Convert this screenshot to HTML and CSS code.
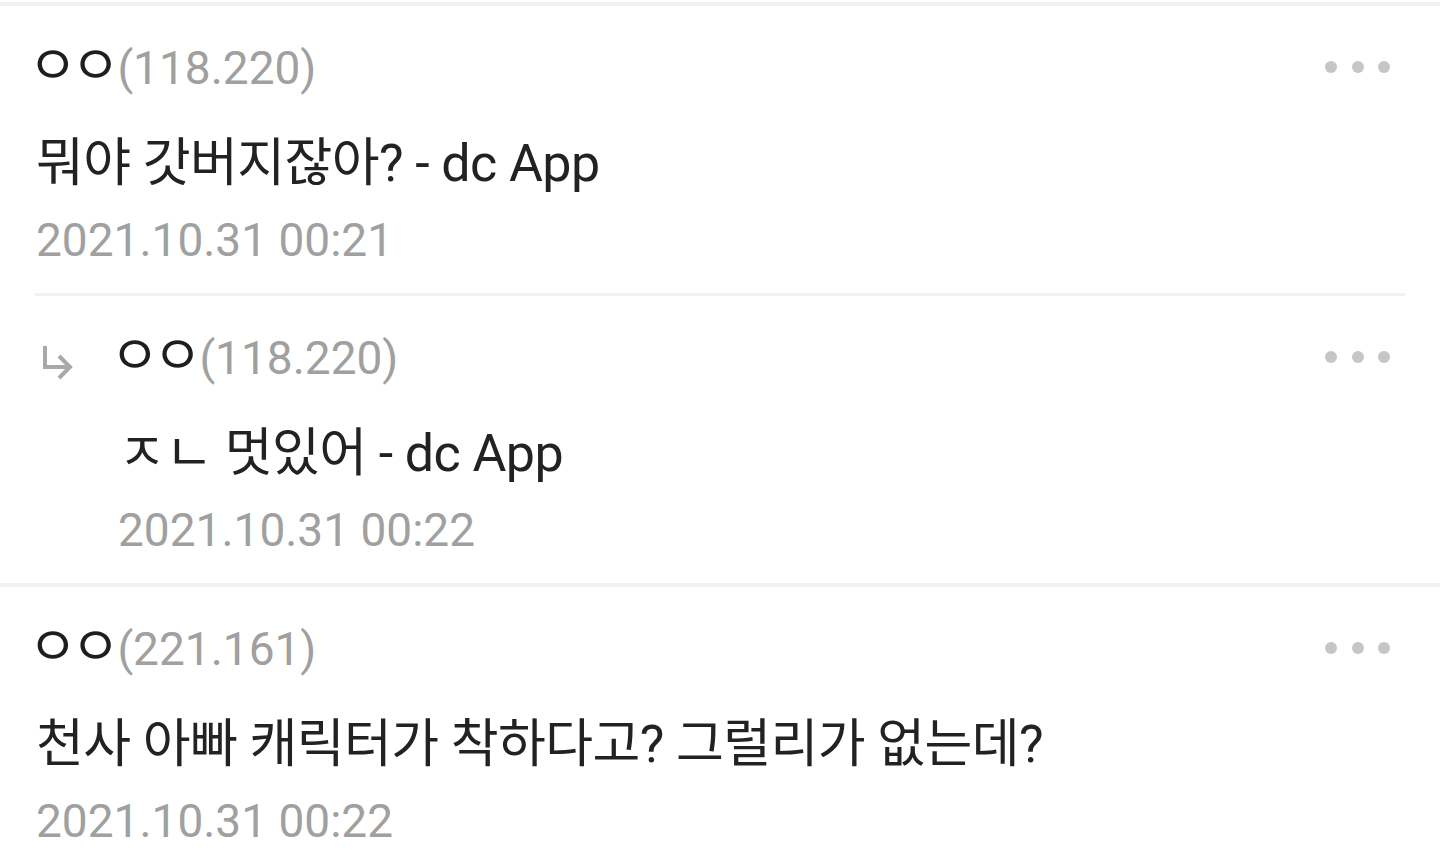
FILE: index.html
```html
<!DOCTYPE html>
<html lang="ko">
<head>
    <meta charset="UTF-8">
    <title>댓글</title>
    <link rel="stylesheet" href="styles.css">
</head>
<body>
    <ul class="comment-list">
        <li class="comment-group">
            <div class="comment">
                <div class="comment-head">
                    <p class="writer"><span class="nick">ㅇㅇ</span><span class="ip">(118.220)</span></p>
                    <button class="more" type="button"><span></span><span></span><span></span></button>
                </div>
                <p class="text">뭐야 갓버지잖아? - dc App</p>
                <p class="date">2021.10.31 00:21</p>
            </div>
            <!-- reply -->
            <div class="comment reply">
                <div class="reply-mark">
                    <svg width="34" height="38" viewBox="0 0 34 38" fill="none" stroke="#a9a9a9" stroke-width="4">
                        <path d="M5 3 V24 H30"/>
                        <path d="M19 13 L30 24 L19 35"/>
                    </svg>
                </div>
                <div class="reply-body">
                    <div class="comment-head">
                        <p class="writer"><span class="nick">ㅇㅇ</span><span class="ip">(118.220)</span></p>
                        <button class="more" type="button"><span></span><span></span><span></span></button>
                    </div>
                    <p class="text">ㅈㄴ 멋있어 - dc App</p>
                    <p class="date">2021.10.31 00:22</p>
                </div>
            </div>
        </li>
        <li class="comment-group">
            <div class="comment">
                <div class="comment-head">
                    <p class="writer"><span class="nick">ㅇㅇ</span><span class="ip">(221.161)</span></p>
                    <button class="more" type="button"><span></span><span></span><span></span></button>
                </div>
                <p class="text">천사 아빠 캐릭터가 착하다고? 그럴리가 없는데?</p>
                <p class="date">2021.10.31 00:22</p>
            </div>
        </li>
    </ul>
</body>
</html>
```

FILE: styles.css
```css
html, body {
    overflow: hidden;
}
body {
    margin: 0;
    padding-top: 2px;
    background-color: #ffffff;
    font-family: Roboto, "Noto Sans CJK KR", sans-serif;
    color: #222222;
}
p {
    margin: 0;
}
.comment-list {
    list-style: none;
    margin: 0;
    padding: 0;
    border-top: 4px solid #f2f2f2;
}
.comment-group {
    border-bottom: 4px solid #f2f2f2;
}
.comment {
    padding: 31px 50px 23px 36px;
}
.comment-head {
    display: flex;
    align-items: center;
    justify-content: space-between;
    height: 60px;
}
.writer {
    font-size: 46px;
    line-height: 60px;
    white-space: nowrap;
}
.nick {
    font-size: 54px;
    letter-spacing: -7px;
    margin-left: -8px;
    margin-right: 4px;
    vertical-align: -1px;
    color: #1e1e1e;
}
.ip {
    color: #a0a0a0;
}
.more {
    display: flex;
    gap: 14.5px;
    padding: 0;
    border: none;
    background: none;
    cursor: pointer;
}
.more span {
    width: 12px;
    height: 12px;
    border-radius: 50%;
    background-color: #c6c6c6;
}
.text {
    margin-top: 32px;
    font-size: 52px;
    line-height: 70px;
    letter-spacing: -0.6px;
    white-space: nowrap;
}
.date {
    margin-top: 11px;
    font-size: 46px;
    line-height: 60px;
    color: #a0a0a0;
}
/* reply sits inside the parent's group, with an inset divider */
.reply {
    display: flex;
    margin: 0 35px;
    padding-left: 1px;
    padding-right: 15px;
    border-top: 3px solid #f1f1f1;
}
.reply-mark {
    flex: 0 0 82px;
}
.reply-mark svg {
    display: block;
    margin: 16px 0 0 4px;
}
.reply-body {
    flex: 1;
}
```
